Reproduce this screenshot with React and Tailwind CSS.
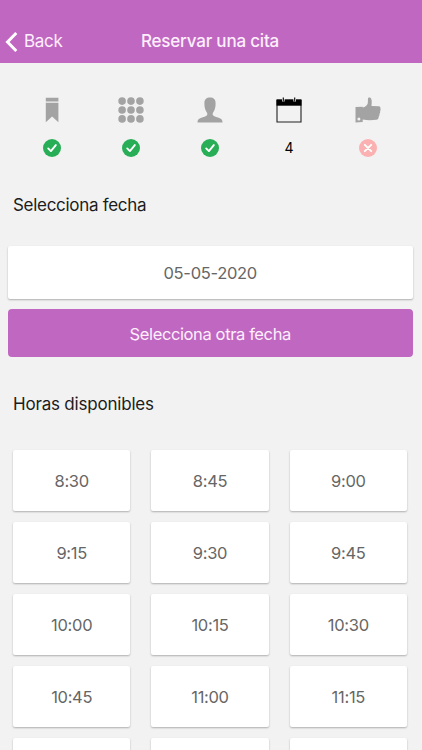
import React from 'react';

const HOURS = [
  '8:30', '8:45', '9:00',
  '9:15', '9:30', '9:45',
  '10:00', '10:15', '10:30',
  '10:45', '11:00', '11:15',
  '', '', '',
];

const BookmarkIcon = () => (
  <svg className="w-[26px] h-[26px] fill-[#a3a3a3]" viewBox="0 0 26 26">
    <path d="M6.8 0.7h12.6v3.9H6.8zM6.8 5.7h12.6v19.5l-6.3-5.8-6.3 5.8z" />
  </svg>
);

const GridIcon = () => (
  <svg className="w-[26px] h-[26px] fill-[#a3a3a3]" viewBox="0 0 26 26">
    {[4.1, 13, 21.9].map(y => (
      [4.1, 13, 21.9].map(x => <circle key={`${x}-${y}`} cx={x} cy={y} r="3.8" />)
    ))}
  </svg>
);

const PersonIcon = () => (
  <svg className="w-[26px] h-[26px] fill-[#a3a3a3]" viewBox="0 0 26 26">
    <path d="M13 0.6c-3.500 0-5.700 2-5.600 5.900 0 3.900.8 6.700 2.300 8.700.8 1.100.9 2.500.1 3.200-1.700 1.400-6 1.900-8 3.500-1 .8-1.300 2-1.300 3.500h25c0-1.500-.3-2.700-1.300-3.500-2-1.600-6.300-2.100-8-3.500-.8-.7-.7-2.100.1-3.200 1.500-2 2.300-4.800 2.300-8.700.1-3.900-2.100-5.900-5.600-5.900z" />
  </svg>
);

const CalendarIcon = () => (
  <svg className="w-[26px] h-[26px]" viewBox="0 0 26 26">
    <path d="M1 3.500h24v21.500H1z" fill="none" stroke="#222" strokeWidth="1.100" />
    <path d="M.5 2.300h25v6.400H.5z" fill="#000" />
    <path d="M7.300 1v3.600M18.700 1v3.600" stroke="#f2f2f2" strokeWidth="2.600" />
    <path d="M7.300 .5v3.900M18.700 .5v3.900" stroke="#111" strokeWidth="1.200" />
  </svg>
);

const ThumbIcon = () => (
  <svg className="w-[26px] h-[26px] fill-[#a3a3a3]" viewBox="0 0 26 26">
    <path
      fillRule="evenodd"
      d="M.5 9.900l7.200-.2v.7c2.700-.4 4.200-1.800 5-3.900.5-1.600-.1-4.600.5-5.500.7-.8 2.500-.5 3.100 1 .8 2.200.3 4.600.2 7.100l7.400.1c1.200.1 1.800 1.100 1.500 2.200.4 1 .2 2-.3 2.700.3 1-.1 2.100-.6 2.900.1 1.100-.2 2-.8 2.700 0 1.700-.8 2.800-2.300 3-4.400.5-8.400.8-13.700-.2v2.600l-7.200.4zM3.900 20.600a1.500 1.500 0 1 0 0 3 1.500 1.500 0 1 0 0-3z"
    />
  </svg>
);

const StepStatus = ({ status }) => {
  if (status === 'current') {
    return <span className="h-[18px] text-[14px] leading-[18px] text-black">4</span>;
  }

  const done = status === 'done';
  return (
    <svg className="w-[18px] h-[18px]" viewBox="0 0 18 18">
      <circle cx="9" cy="9" r="9" className={done ? 'fill-[#27ae57]' : 'fill-[#fbb1b1]'} />
      <path
        d={done ? 'M5.200 9.400l2.700 2.700 4.900-6' : 'M5.800 5.800l6.400 6.400M12.200 5.800l-6.400 6.400'}
        fill="none"
        stroke="#fff"
        strokeWidth="1.900"
        strokeLinecap="round"
        strokeLinejoin="round"
      />
    </svg>
  );
};

const STEPS = [
  { id: 'service', icon: BookmarkIcon, status: 'done' },
  { id: 'category', icon: GridIcon, status: 'done' },
  { id: 'employee', icon: PersonIcon, status: 'done' },
  { id: 'date', icon: CalendarIcon, status: 'current' },
  { id: 'confirm', icon: ThumbIcon, status: 'pending' },
];

const Header = () => (
  <header className="h-[63px] pt-[20px] pr-[2px] grid grid-cols-[1fr_auto_1fr] items-center bg-[#c067c1] text-[#fdeffd]">
    <button className="flex items-center gap-[6px] pl-[5px] text-[17px] tracking-[-0.3px]">
      <svg className="w-[13px] h-[22px]" viewBox="0 0 13 22">
        <path d="M11.300 2L2.500 11l8.800 9" fill="none" stroke="#fff" strokeWidth="3" />
      </svg>
      Back
    </button>
    <h1 className="text-[17px] font-medium tracking-[-0.2px]">Reservar una cita</h1>
  </header>
);

const HourCard = ({ hour }) => (
  <button className="h-[61px] pt-[2px] rounded-[2px] bg-white text-[16.5px] tracking-[-0.3px] text-[#666] shadow-[0_1px_2px_rgba(0,0,0,0.28)]">
    {hour}
  </button>
);

const App = () => (
  <div className="h-[750px] overflow-hidden bg-[#f2f2f2] font-['Inter','Liberation_Sans',sans-serif]">
    <Header />

    <div className="flex pl-[12.5px] pt-[34px]">
      {STEPS.map(({ id, icon: Icon, status }) => (
        <div key={id} className="w-[79px] flex flex-col items-center gap-[16px]">
          <Icon />
          <StepStatus status={status} />
        </div>
      ))}
    </div>

    <h2 className="mt-[36px] pl-[13px] h-6 text-[17px] leading-6 tracking-[-0.3px] text-[#1c1c1c]">Selecciona fecha</h2>

    <div className="mt-[29px] ml-[8px] mr-[9.5px] flex flex-col gap-[10px]">
      <div className="h-[53px] pt-[2px] flex items-center justify-center rounded-[2px] bg-white text-[16.5px] tracking-[-0.3px] text-[#666] shadow-[0_1px_2px_rgba(0,0,0,0.28)]">
        05-05-2020
      </div>
      <button className="h-[48px] pt-[2px] rounded-[4px] bg-[#c067c1] text-[16.5px] tracking-[-0.38px] text-[#fdeffd]">
        Selecciona otra fecha
      </button>
    </div>

    <h2 className="mt-[35px] pl-[13px] h-6 text-[17px] leading-6 tracking-[-0.2px] text-[#1c1c1c]">Horas disponibles</h2>

    <div className="mt-[34px] pl-[13px] pr-[15px] grid grid-cols-3 gap-x-[21px] gap-y-[11px]">
      {HOURS.map((hour, i) => (
        <HourCard key={i} hour={hour} />
      ))}
    </div>
  </div>
);

export default App;
